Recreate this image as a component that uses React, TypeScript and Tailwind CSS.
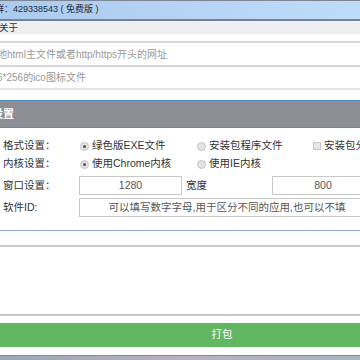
import React from 'react';

function Radio({ checked }: { checked?: boolean }) {
    return (
        <span className="flex h-[9px] w-[9px] shrink-0 items-center justify-center rounded-full border border-[#c4c4c4] bg-[#e4e4e4]">
            {checked && <span className="h-[3px] w-[3px] rounded-full bg-[#505050]" />}
        </span>
    );
}

function Option({ checked, label, square }: { checked?: boolean; label: string; square?: boolean }) {
    return (
        <div className="flex items-center gap-[3px]">
            {square ? (
                <span className="h-[8px] w-[8px] shrink-0 border border-[#c8c8c8] bg-[#e8e8e8]" />
            ) : (
                <Radio checked={checked} />
            )}
            <span>{label}</span>
        </div>
    );
}

export default function App() {
    const font = { fontFamily: '"Liberation Sans", "Noto Sans CJK SC", sans-serif' };

    return (
        <div className="relative h-[360px] w-[360px] overflow-hidden bg-white text-[10.5px] text-[#333]" style={font}>
            {/* title bar */}
            <div className="flex h-[21px] items-center border-t border-b-2 border-t-[#7c8694] border-b-[#75839a] bg-gradient-to-r from-[#abcbee] via-[#b6d3f3] to-[#bddcfa]">
                <span className="ml-[-5px] whitespace-nowrap text-[9px] text-[#1e2a3a]">群：429338543 ( 免费版 )</span>
            </div>

            {/* menu */}
            <div className="flex h-[13px] items-center bg-[#efefef]">
                <span className="ml-[-1px] text-[9.5px] leading-[13px]">关于</span>
            </div>

            {/* url / icon inputs */}
            <div className="mt-[7px] text-[10px]">
                <div className="flex h-[24px] items-center border-t-2 border-[#d8d8d8]">
                    <span className="ml-[-3px] whitespace-nowrap text-[#9a9a9a]">地html主文件或者http/https开头的网址</span>
                </div>
                <div className="flex h-[25px] items-center border-y-2 border-t-[#d6d6d6] border-b-[#e4e4e4]">
                    <span className="ml-[-3px] whitespace-nowrap text-[#9a9a9a]">6*256的ico图标文件</span>
                </div>
            </div>

            {/* settings header */}
            <div className="mt-[10px] flex h-[28px] items-center border-y border-[#4f8bc9] bg-[#8e8e97]">
                <span className="ml-[-8px] text-[11px] font-bold text-white">设置</span>
            </div>

            {/* settings rows */}
            <div className="pt-[9px]">
                <div className="flex h-[18px] items-center whitespace-nowrap">
                    <span className="w-[80px] shrink-0 pl-[3px]">格式设置：</span>
                    <div className="w-[117px] shrink-0"><Option checked label="绿色版EXE文件" /></div>
                    <div className="w-[116px] shrink-0"><Option label="安装包程序文件" /></div>
                    <Option square label="安装包分" />
                </div>
                <div className="flex h-[18px] items-center whitespace-nowrap">
                    <span className="w-[80px] shrink-0 pl-[3px]">内核设置：</span>
                    <div className="w-[117px] shrink-0"><Option checked label="使用Chrome内核" /></div>
                    <Option label="使用IE内核" />
                </div>
                <div className="mt-[3px] flex h-[19px] items-center whitespace-nowrap">
                    <span className="w-[79px] shrink-0 pl-[3px]">窗口设置：</span>
                    <div className="flex h-[19px] w-[103px] shrink-0 items-center justify-center border border-[#c8c8c8] text-[#555]">1280</div>
                    <span className="w-[90px] shrink-0 pl-[4px]">宽度</span>
                    <div className="flex h-[19px] w-[102px] shrink-0 items-center justify-center border border-[#c8c8c8] text-[#555]">800</div>
                </div>
                <div className="mt-[3px] flex h-[19px] items-center whitespace-nowrap">
                    <span className="w-[79px] shrink-0 pl-[3px]">软件ID:</span>
                    <div className="flex h-[19px] w-[296px] shrink-0 items-center justify-center border border-[#c8c8c8] text-[#555]">
                        可以填写数字字母,用于区分不同的应用,也可以不填
                    </div>
                </div>
            </div>

            {/* dividers */}
            <div className="mt-[13px] border-t border-[#8eaad2]" />
            <div className="mt-[14px] border-t-2 border-[#cbcbcb]" />
            <div className="mt-[67px] border-t-2 border-[#c8c8c8]" />

            {/* pack button */}
            <div className="mt-[7px] flex h-[24px] w-[444px] items-center justify-center bg-[#62b862] text-white">打包</div>

            {/* taskbar strip */}
            <div className="mt-[8px] h-[6px] border-t border-[#8a8a8a] bg-gradient-to-r from-[#9aa8b8] via-[#b8b0c0] to-[#a8b4c4]" />
        </div>
    );
}
